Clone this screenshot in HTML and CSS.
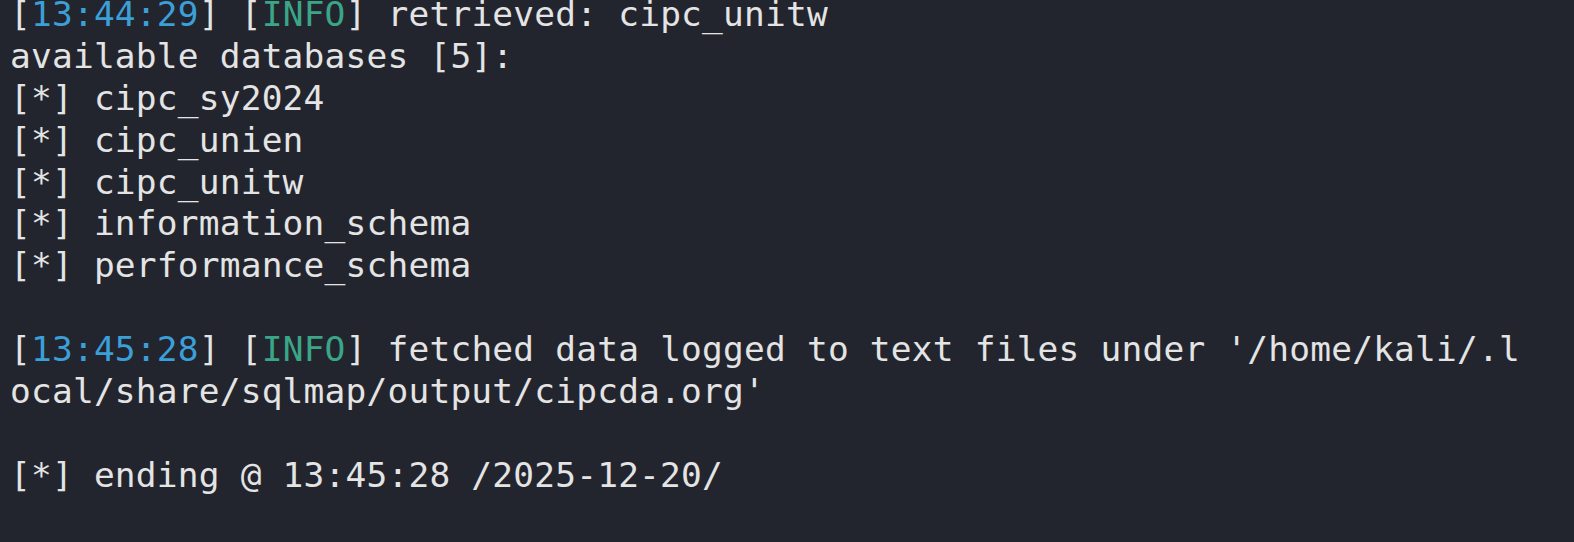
FILE: index.html
```html
<!DOCTYPE html>
<html lang="en">
<head>
<meta charset="utf-8">
<title>Terminal</title>
<link rel="stylesheet" href="styles.css">
</head>
<body>
<main class="term">
<div class="line">[<span class="ts">13:44:29</span>] [<span class="lvl">INFO</span>] retrieved: cipc_unitw</div>
<div class="line">available databases [5]:</div>
<div class="line">[*] cipc_sy2024</div>
<div class="line">[*] cipc_unien</div>
<div class="line">[*] cipc_unitw</div>
<div class="line">[*] information_schema</div>
<div class="line">[*] performance_schema</div>
<div class="line"> </div>
<div class="line">[<span class="ts">13:45:28</span>] [<span class="lvl">INFO</span>] fetched data logged to text files under '/home/kali/.l</div>
<div class="line">ocal/share/sqlmap/output/cipcda.org'</div>
<div class="line"> </div>
<div class="line">[*] ending @ 13:45:28 /2025-12-20/</div>
</main>
</body>
</html>
```

FILE: styles.css
```css
html, body {
  margin: 0;
  padding: 0;
  background: #23252e;
  height: 100%;
  overflow: hidden;
}
.term {
  margin-top: -6px;
  padding-left: 10px;
  font-family: "DejaVu Sans Mono", "Liberation Mono", monospace;
  font-size: 34.5px;
  letter-spacing: 0.2px;
  line-height: 41.9px;
  color: #e4e4e4;
}
.line {
  height: 41.9px;
  white-space: pre;
}
.ts {
  color: #3b9fd8;
}
.lvl {
  color: #3aa587;
}
```
